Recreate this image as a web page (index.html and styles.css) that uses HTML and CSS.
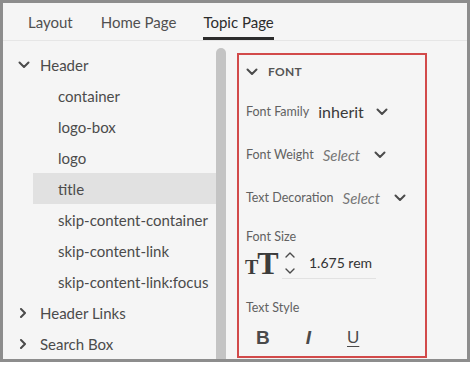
FILE: index.html
```html
<!DOCTYPE html>
<html lang="en">
<head>
    <meta charset="UTF-8">
    <title>Topic Page</title>
    <link rel="stylesheet" href="styles.css">
</head>
<body>
    <div class="panel">
        <div class="tabs">
            <div class="tab tab-layout">Layout</div>
            <div class="tab tab-home">Home Page</div>
            <div class="tab tab-topic active">Topic Page</div>
        </div>
        <div class="content">
            <div class="tree">
                <div class="tree-row group">
                    <svg class="chev" width="12" height="8" viewBox="0 0 12 8"><polyline points="1.5,1.5 6,6 10.5,1.5" /></svg>
                    <span>Header</span>
                </div>
                <div class="tree-row child">container</div>
                <div class="tree-row child">logo-box</div>
                <div class="tree-row child">logo</div>
                <div class="tree-row child selected">title</div>
                <div class="tree-row child">skip-content-container</div>
                <div class="tree-row child">skip-content-link</div>
                <div class="tree-row child">skip-content-link:focus</div>
                <div class="tree-row group">
                    <svg class="chev chev-right" width="12" height="10" viewBox="0 0 12 10"><polyline points="3,1 7,5 3,9" /></svg>
                    <span>Header Links</span>
                </div>
                <div class="tree-row group">
                    <svg class="chev chev-right" width="12" height="10" viewBox="0 0 12 10"><polyline points="3,1 7,5 3,9" /></svg>
                    <span>Search Box</span>
                </div>
            </div>
            <div class="scrollbar"></div>
            <div class="props">
                <div class="font-box">
                    <div class="section-head">
                        <svg class="chev" width="12" height="8" viewBox="0 0 12 8"><polyline points="1.5,1.5 6,6 10.5,1.5" /></svg>
                        <span>FONT</span>
                    </div>
                    <div class="prop prop-family">
                        <span class="label">Font Family</span>
                        <span class="value">inherit</span>
                        <svg class="chev" width="12" height="8" viewBox="0 0 12 8"><polyline points="1.5,1.5 6,6 10.5,1.5" /></svg>
                    </div>
                    <div class="prop">
                        <span class="label">Font Weight</span>
                        <span class="placeholder">Select</span>
                        <svg class="chev" width="12" height="8" viewBox="0 0 12 8"><polyline points="1.5,1.5 6,6 10.5,1.5" /></svg>
                    </div>
                    <div class="prop">
                        <span class="label">Text Decoration</span>
                        <span class="placeholder">Select</span>
                        <svg class="chev" width="12" height="8" viewBox="0 0 12 8"><polyline points="1.5,1.5 6,6 10.5,1.5" /></svg>
                    </div>
                    <div class="label block-label size-label">Font Size</div>
                    <div class="size-row">
                        <div class="size-icon"><span class="t-small">T</span><span class="t-big">T</span></div>
                        <div class="size-field">
                            <div class="stepper">
                                <svg width="12" height="24" viewBox="0 0 12 24"><polyline points="2,6 6,2 10,6" /><polyline points="2,18 6,22 10,18" /></svg>
                            </div>
                            <span class="size-value">1.675 rem</span>
                        </div>
                    </div>
                    <div class="label block-label style-label">Text Style</div>
                    <div class="style-row">
                        <span class="style-btn bold">B</span>
                        <span class="style-btn italic">I</span>
                        <span class="style-btn underline">U</span>
                    </div>
                </div>
            </div>
        </div>
    </div>
</body>
</html>
```

FILE: styles.css
```css
* {
    box-sizing: border-box;
    margin: 0;
    padding: 0;
}

body {
    font-family: Lato, 'Noto Sans', sans-serif;
    background-color: #ffffff;
    color: #4b4b4b;
}

.panel {
    width: 470px;
    height: 362px;
    border: 3px solid #8d8d8d;
    background-color: #f5f5f5;
    overflow: hidden;
    display: flex;
    flex-direction: column;
}

svg polyline {
    fill: none;
    stroke: #4b4b4b;
    stroke-width: 2;
    stroke-linecap: round;
    stroke-linejoin: round;
}

/* tabs */
.tabs {
    display: flex;
    height: 38px;
    border-bottom: 1px solid #e6e6e6;
    flex-shrink: 0;
}

.tab {
    font-size: 15px;
    color: #505050;
    padding-top: 10px;
    height: 37px;
    border-bottom: 3px solid transparent;
}

.tab-layout {
    margin-left: 25px;
}

.tab-home {
    margin-left: 28px;
}

.tab-topic {
    margin-left: 27px;
}

.tab.active {
    color: #2c2c2c;
    border-bottom-color: #2c2c2c;
}

/* body */
.content {
    display: flex;
    flex: 1;
    min-height: 0;
}

.tree {
    width: 213px;
    padding-top: 8px;
    flex-shrink: 0;
}

.tree-row {
    height: 31px;
    display: flex;
    align-items: center;
    font-size: 15px;
    color: #4b4b4b;
}

.tree-row.group {
    padding-left: 15px;
}

.tree-row.group .chev {
    margin-right: 10px;
}

.tree-row.child {
    margin-left: 30px;
    padding-left: 25px;
}

.tree-row.selected {
    background-color: #e1e1e1;
}

.scrollbar {
    width: 10px;
    margin-top: 7px;
    background-color: #c4c4c4;
    border-radius: 5px 5px 0 0;
    flex-shrink: 0;
}

.props {
    flex: 1;
    padding-left: 11px;
    padding-top: 12px;
}

.font-box {
    width: 190px;
    height: 305px;
    border: 2px solid #d24a4a;
    padding-left: 7px;
}

.section-head {
    display: flex;
    align-items: center;
    height: 33px;
    font-size: 12px;
    font-weight: bold;
    color: #555555;
    letter-spacing: 0.3px;
}

.section-head .chev {
    margin-right: 10px;
}

.prop {
    display: flex;
    align-items: center;
    height: 43px;
}

.prop-family {
    margin-top: 2px;
}

.label {
    font-size: 12.5px;
    color: #616161;
}

.value {
    font-size: 16px;
    color: #3a3a3a;
    margin-left: 9px;
    margin-right: 12px;
}

.placeholder {
    font-size: 15px;
    font-style: italic;
    color: #777777;
    margin-left: 9px;
    margin-right: 14px;
}

.block-label {
    height: 20px;
    line-height: 20px;
}

.size-label {
    margin-top: 8px;
}

.size-row {
    display: flex;
    align-items: center;
    height: 32px;
}

.size-icon {
    display: flex;
    align-items: baseline;
    font-family: 'Liberation Serif', serif;
    font-weight: bold;
    color: #3c3c3c;
    width: 38px;
    margin-left: -1px;
    margin-top: 2px;
}

.t-small {
    font-size: 20px;
}

.t-big {
    font-size: 32px;
    line-height: 26px;
    margin-left: -1px;
}

.size-field {
    display: flex;
    align-items: center;
    width: 94px;
    height: 32px;
    border-bottom: 1px solid #e2e2e2;
    margin-left: -1px;
}

.stepper {
    display: flex;
    margin-left: 2px;
}

.stepper polyline {
    stroke-width: 1.4;
}

.size-value {
    font-size: 14px;
    color: #333333;
    margin-left: 13px;
}

.style-label {
    margin-top: 19px;
}

.style-row {
    display: flex;
    align-items: center;
    height: 40px;
}

.style-btn {
    font-size: 19px;
    color: #4a4a4a;
    font-family: 'Liberation Sans', sans-serif;
}

.bold {
    font-weight: bold;
    margin-left: 10px;
}

.italic {
    margin-left: 36px;
    font-style: italic;
    font-weight: bold;
}

.underline {
    margin-left: 36px;
    text-decoration: underline;
    text-underline-offset: 3px;
    font-size: 17px;
}
```
